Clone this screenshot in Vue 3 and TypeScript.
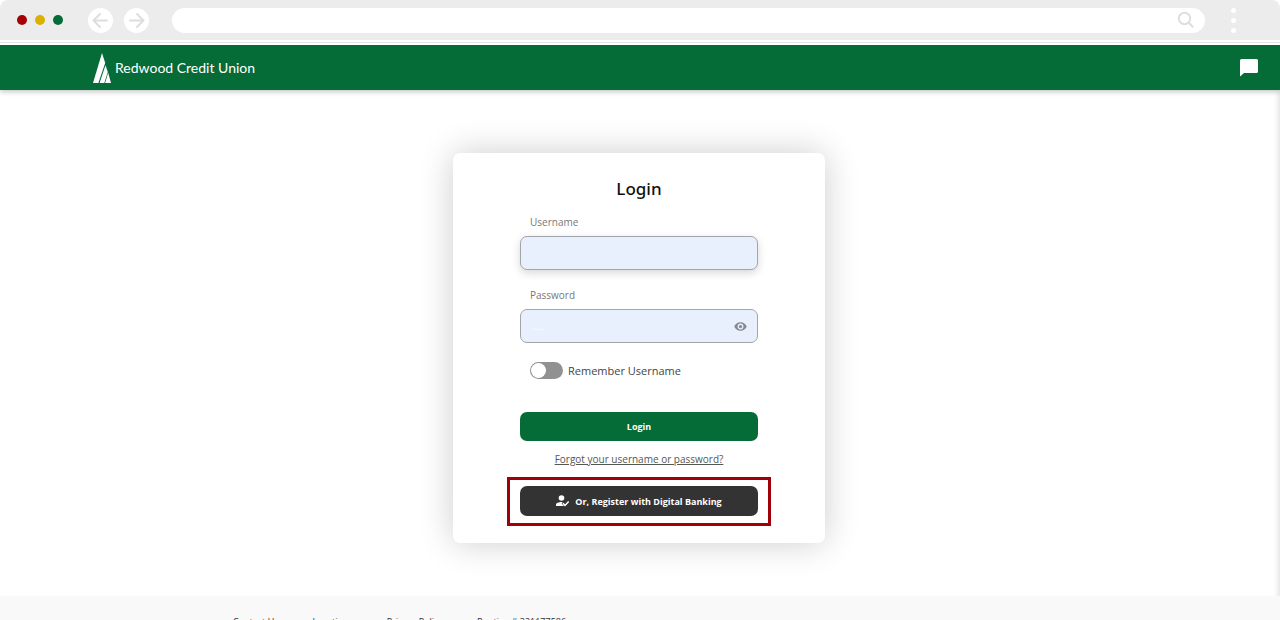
<script setup lang="ts">
import { ref } from 'vue'

const address = ref('')
const username = ref('')
const password = ref('')
const remember = ref(false)
const showPassword = ref(false)
</script>

<template>
  <div class="window">
    <div class="toolbar">
      <div class="lights"><span class="light red"></span><span class="light yellow"></span><span class="light green"></span></div>
      <div class="nav">
        <button type="button" class="round" aria-label="Back">
          <svg width="25" height="25" viewBox="0 0 25 25"><path d="M19 12.5H6M12 6l-6.5 6.5L12 19" /></svg>
        </button>
        <button type="button" class="round" aria-label="Forward">
          <svg width="25" height="25" viewBox="0 0 25 25"><path d="M6 12.5h13M13 6l6.5 6.5L13 19" /></svg>
        </button>
      </div>
      <div class="address">
        <input v-model="address" type="text" aria-label="Address" />
        <svg width="18" height="18" viewBox="0 0 18 18"><circle cx="7.5" cy="7.5" r="5.7" /><path d="M11.7 11.7l4 4" /></svg>
      </div>
      <button type="button" class="more" aria-label="More"><span></span><span></span><span></span></button>
    </div>

    <header class="header">
      <a class="brand" href="#">
        <svg width="18" height="30" viewBox="0 0 18 30" fill="#fff">
          <path d="M9 0L0 30h5.400L12.200 10z" />
          <path d="M12.500 12.300L6.600 30h4.700l3.500-11z" />
          <path d="M15.200 19.700L12.100 30H18z" />
        </svg>
        <span>Redwood Credit Union</span>
      </a>
      <button type="button" class="chat" aria-label="Chat">
        <svg width="18" height="18" viewBox="0 0 18 18"><path fill="#fff" d="M1.5 0h15Q18 0 18 1.5v11q0 1.5-1.5 1.5H4l-4 3.5v-16Q0 0 1.5 0z" /></svg>
      </button>
    </header>

    <main class="main">
      <form class="card" @submit.prevent>
        <h1>Login</h1>
        <label class="label" for="username">Username</label>
        <input id="username" v-model="username" class="field raised" type="text" />
        <label class="label second" for="password">Password</label>
        <div class="password">
          <input id="password" v-model="password" class="field" :type="showPassword ? 'text' : 'password'" placeholder="....." />
          <button type="button" class="eye" aria-label="Show password" @click="showPassword = !showPassword">
            <svg width="13" height="13" viewBox="0 0 24 24"><path fill="#858a90" fill-rule="evenodd" d="M12 4C6.5 4 2.3 7.4.5 12c1.8 4.6 6 8 11.5 8s9.700-3.400 11.500-8C21.700 7.400 17.500 4 12 4zm0 13.400a5.400 5.400 0 1 1 0-10.800 5.400 5.400 0 0 1 0 10.800zm0-8.400a3 3 0 1 0 0 6 3 3 0 0 0 0-6z" /></svg>
          </button>
        </div>
        <label class="remember">
          <input v-model="remember" type="checkbox" />
          <span>Remember Username</span>
        </label>
        <button type="submit" class="btn login">Login</button>
        <a class="forgot" href="#">Forgot your username or password?</a>
        <div class="highlight">
          <button type="button" class="btn register">
            <svg width="13" height="12" viewBox="0 0 13 12">
              <circle cx="5.500" cy="3" r="2.800" fill="#fff" />
              <path fill="#fff" d="M0 11V9.600C0 7.800 3 6.900 5.600 6.900l1.200.1-1.200 1.500L8 11z" />
              <path fill="none" stroke="#fff" stroke-width="1.500" d="M6.900 8.300L9 10.400l3.700-4" />
            </svg>
            <span>Or, Register with Digital Banking</span>
          </button>
        </div>
      </form>
    </main>

    <footer class="footer">
      <a href="#">Contact Us</a>
      <a href="#">Locations</a>
      <a href="#">Privacy Policy</a>
      <span>Routing # 321177586</span>
    </footer>
  </div>
</template>

<style>
body {
  background: #fff;
}
</style>

<style scoped>
* {
  box-sizing: border-box;
}
.window {
  display: flex;
  flex-direction: column;
  height: 100vh;
  overflow: hidden;
  font-family: "Open Sans", "Noto Sans", sans-serif;
}
button {
  border: 0;
  padding: 0;
  background: none;
  font-family: inherit;
  cursor: pointer;
}
svg {
  display: block;
  flex: none;
}
.toolbar {
  display: flex;
  align-items: center;
  flex: none;
  height: 40px;
  padding: 0 44px 0 17px;
  background: #ececec;
  border-radius: 8px 8px 0 0;
}
.lights {
  display: flex;
  gap: 8px;
  margin-right: 25px;
}
.light {
  width: 10px;
  height: 10px;
  border-radius: 50%;
}
.red { background: #a50006; }
.yellow { background: #dcb000; }
.green { background: #056c38; }
.nav {
  display: flex;
  gap: 11px;
  margin-right: 23px;
}
.round {
  width: 25px;
  height: 25px;
  border-radius: 50%;
  background: #fff;
}
.round svg,
.address svg {
  fill: none;
  stroke: #dedede;
  stroke-width: 2;
  stroke-linecap: round;
}
.address {
  display: flex;
  align-items: center;
  flex: 1;
  height: 25px;
  padding: 0 10px 0 14px;
  border-radius: 13px;
  background: #fff;
}
.address input {
  flex: 1;
  min-width: 0;
  border: 0;
  outline: 0;
  background: transparent;
}
.more {
  display: flex;
  flex-direction: column;
  gap: 5px;
  margin-left: 26px;
}
.more span {
  width: 5px;
  height: 5px;
  border-radius: 50%;
  background: #fff;
}
.header {
  display: flex;
  align-items: center;
  justify-content: space-between;
  flex: none;
  position: relative;
  height: 45px;
  margin-top: 5px;
  padding: 0 22px 0 93px;
  background: #056c38;
  box-shadow: 0 -2px 0 #fff, 0 -3px 0 #e4e4e4, 0 2px 5px rgba(0, 0, 0, 0.22);
}
.brand {
  display: flex;
  align-items: center;
  gap: 4px;
  color: #fff;
  font: 14px/20px Lato, sans-serif;
  text-decoration: none;
}
.main {
  flex: none;
  padding: 63px 2px 53px 0;
  box-shadow: inset -6px 0 6px -5px rgba(0, 0, 0, 0.15);
}
.card {
  display: flex;
  flex-direction: column;
  width: 372px;
  max-width: 100%;
  margin: 0 auto;
  padding: 22px 67px 17px;
  border-radius: 7px;
  background: #fff;
  box-shadow: 0 0 35px rgba(0, 0, 0, 0.2);
}
h1 {
  margin: 0;
  color: #111;
  font-family: "Noto Sans", "Open Sans", sans-serif;
  font-size: 17px;
  font-weight: 500;
  line-height: 28px;
  text-align: center;
}
.label {
  margin: 11px 0 6px;
  padding-left: 10px;
  color: #777;
  font-size: 10px;
  line-height: 16px;
}
.second {
  margin-top: 17px;
}
.field {
  display: block;
  width: 100%;
  height: 34px;
  padding: 0 34px 0 10px;
  border: 1px solid #a2a6ac;
  border-radius: 7px;
  outline: 0;
  background: #e8f0fe;
  font: 10px "Open Sans", sans-serif;
}
.field::placeholder {
  color: #fff;
}
.raised {
  box-shadow: 0 3px 8px rgba(0, 0, 0, 0.16);
}
.password {
  position: relative;
}
.eye {
  position: absolute;
  right: 11px;
  top: 11px;
}
.remember {
  display: flex;
  align-items: center;
  gap: 5px;
  height: 18px;
  margin: 18px 0 33px 10px;
  color: #444;
  font-size: 11px;
}
.remember input {
  appearance: none;
  display: flex;
  width: 33px;
  height: 17px;
  margin: 0;
  padding: 1px;
  border-radius: 9px;
  background: #919191;
}
.remember input::before {
  content: "";
  width: 15px;
  height: 15px;
  border-radius: 50%;
  background: #fff;
}
.remember input:checked {
  justify-content: flex-end;
  background: #056c38;
}
.btn {
  display: flex;
  align-items: center;
  justify-content: center;
  width: 100%;
  border-radius: 7px;
  color: #fff;
  font-size: 9px;
  font-weight: 700;
}
.login {
  height: 29px;
  background: #056c38;
}
.forgot {
  align-self: center;
  margin: 10px 0;
  color: #555;
  font-size: 10px;
  line-height: 16px;
}
.highlight {
  margin: 0 -13px;
  padding: 6px 10px 7px;
  border: 3px solid #a00008;
}
.register {
  gap: 6px;
  height: 30px;
  background: #333;
}
.footer {
  display: flex;
  flex: none;
  gap: 34px;
  padding: 20px 0 20px 233px;
  background: #f9f9f9;
  color: #333;
  font-size: 9px;
  line-height: 12px;
}
.footer a {
  color: inherit;
  text-decoration: none;
}
</style>
